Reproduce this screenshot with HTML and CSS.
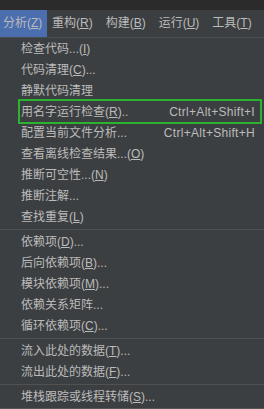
FILE: index.html
```html
<!DOCTYPE html>
<html lang="zh-CN">
<head>
    <meta charset="UTF-8">
    <meta name="viewport" content="width=device-width, initial-scale=1.0">
    <title>分析菜单</title>
    <link rel="stylesheet" href="styles.css">
</head>
<body>
    <div class="titlebar"></div>
    <div class="menubar">
        <div class="menubar-item active">分析(<u>Z</u>)</div>
        <div class="menubar-item">重构(<u>R</u>)</div>
        <div class="menubar-item">构建(<u>B</u>)</div>
        <div class="menubar-item">运行(<u>U</u>)</div>
        <div class="menubar-item">工具(<u>T</u>)</div>
        <div class="menubar-item">V</div>
    </div>

    <div class="menu">
        <div class="item"><span>检查代码...(<u>I</u>)</span></div>
        <div class="item"><span>代码清理(<u>C</u>)...</span></div>
        <div class="item"><span>静默代码清理</span></div>
        <div class="item marked"><span>用名字运行检查(<u>R</u>)..</span><span class="shortcut">Ctrl+Alt+Shift+I</span></div>
        <div class="item"><span>配置当前文件分析...</span><span class="shortcut">Ctrl+Alt+Shift+H</span></div>
        <div class="item"><span>查看离线检查结果...(<u>O</u>)</span></div>
        <div class="item"><span>推断可空性...(<u>N</u>)</span></div>
        <div class="item"><span>推断注解...</span></div>
        <div class="item"><span>查找重复(<u>L</u>)</span></div>
        <div class="sep"></div>
        <div class="item"><span>依赖项(<u>D</u>)...</span></div>
        <div class="item"><span>后向依赖项(<u>B</u>)...</span></div>
        <div class="item"><span>模块依赖项(<u>M</u>)...</span></div>
        <div class="item"><span>依赖关系矩阵...</span></div>
        <div class="item"><span>循环依赖项(<u>C</u>)...</span></div>
        <div class="sep"></div>
        <div class="item"><span>流入此处的数据(<u>T</u>)...</span></div>
        <div class="item"><span>流出此处的数据(<u>F</u>)...</span></div>
        <div class="sep"></div>
        <div class="item"><span>堆栈跟踪或线程转储(<u>S</u>)...</span></div>
    </div>

    <div class="statusbar">
        <div class="cell first"></div>
        <div class="cell second"></div>
        <div class="cell"></div>
    </div>
</body>
</html>
```

FILE: styles.css
```css
body {
    margin: 0;
    width: 264px;
    height: 409px;
    overflow: hidden;
    background-color: #3c3f41;
    color: #bbbbbb;
    font-family: "Liberation Sans", "Noto Sans CJK SC", sans-serif;
    font-size: 12px;
}
u {
    text-underline-offset: 1px;
}
.titlebar {
    height: 10px;
    background-color: #2b2b2b;
}
.menubar {
    display: flex;
    height: 27px;
    align-items: center;
    white-space: nowrap;
}
.menubar-item {
    height: 27px;
    line-height: 27px;
    padding: 0 8px 0 5px;
}
.menubar-item.active {
    background-color: #4b6eaf;
    padding: 0 6px 0 3px;
    width: 38px;
}
.menu {
    border-top: 1px solid #4a4d4f;
    padding-top: 1px;
    border-bottom: 1px solid #555555;
}
.item {
    display: flex;
    justify-content: space-between;
    height: 21px;
    line-height: 21px;
    padding: 0 9px 0 21px;
    white-space: nowrap;
}
.item.marked {
    position: relative;
}
.item.marked::after {
    content: "";
    position: absolute;
    left: 18px;
    right: 2px;
    top: -3px;
    bottom: -1px;
    border: 2px solid #2db22d;
}
.shortcut {
    letter-spacing: 0.3px;
}
.sep {
    height: 1px;
    margin: 1px 0 2px;
    background-color: #515151;
}
.statusbar {
    display: flex;
    height: 10px;
    background-color: #2b2b2b;
}
.cell {
    flex: 1;
}
.cell.first {
    flex: 0 0 69px;
    border-right: 1px solid #45484a;
}
.cell.second {
    flex: 0 0 73px;
    border-right: 1px solid #45484a;
}
```
